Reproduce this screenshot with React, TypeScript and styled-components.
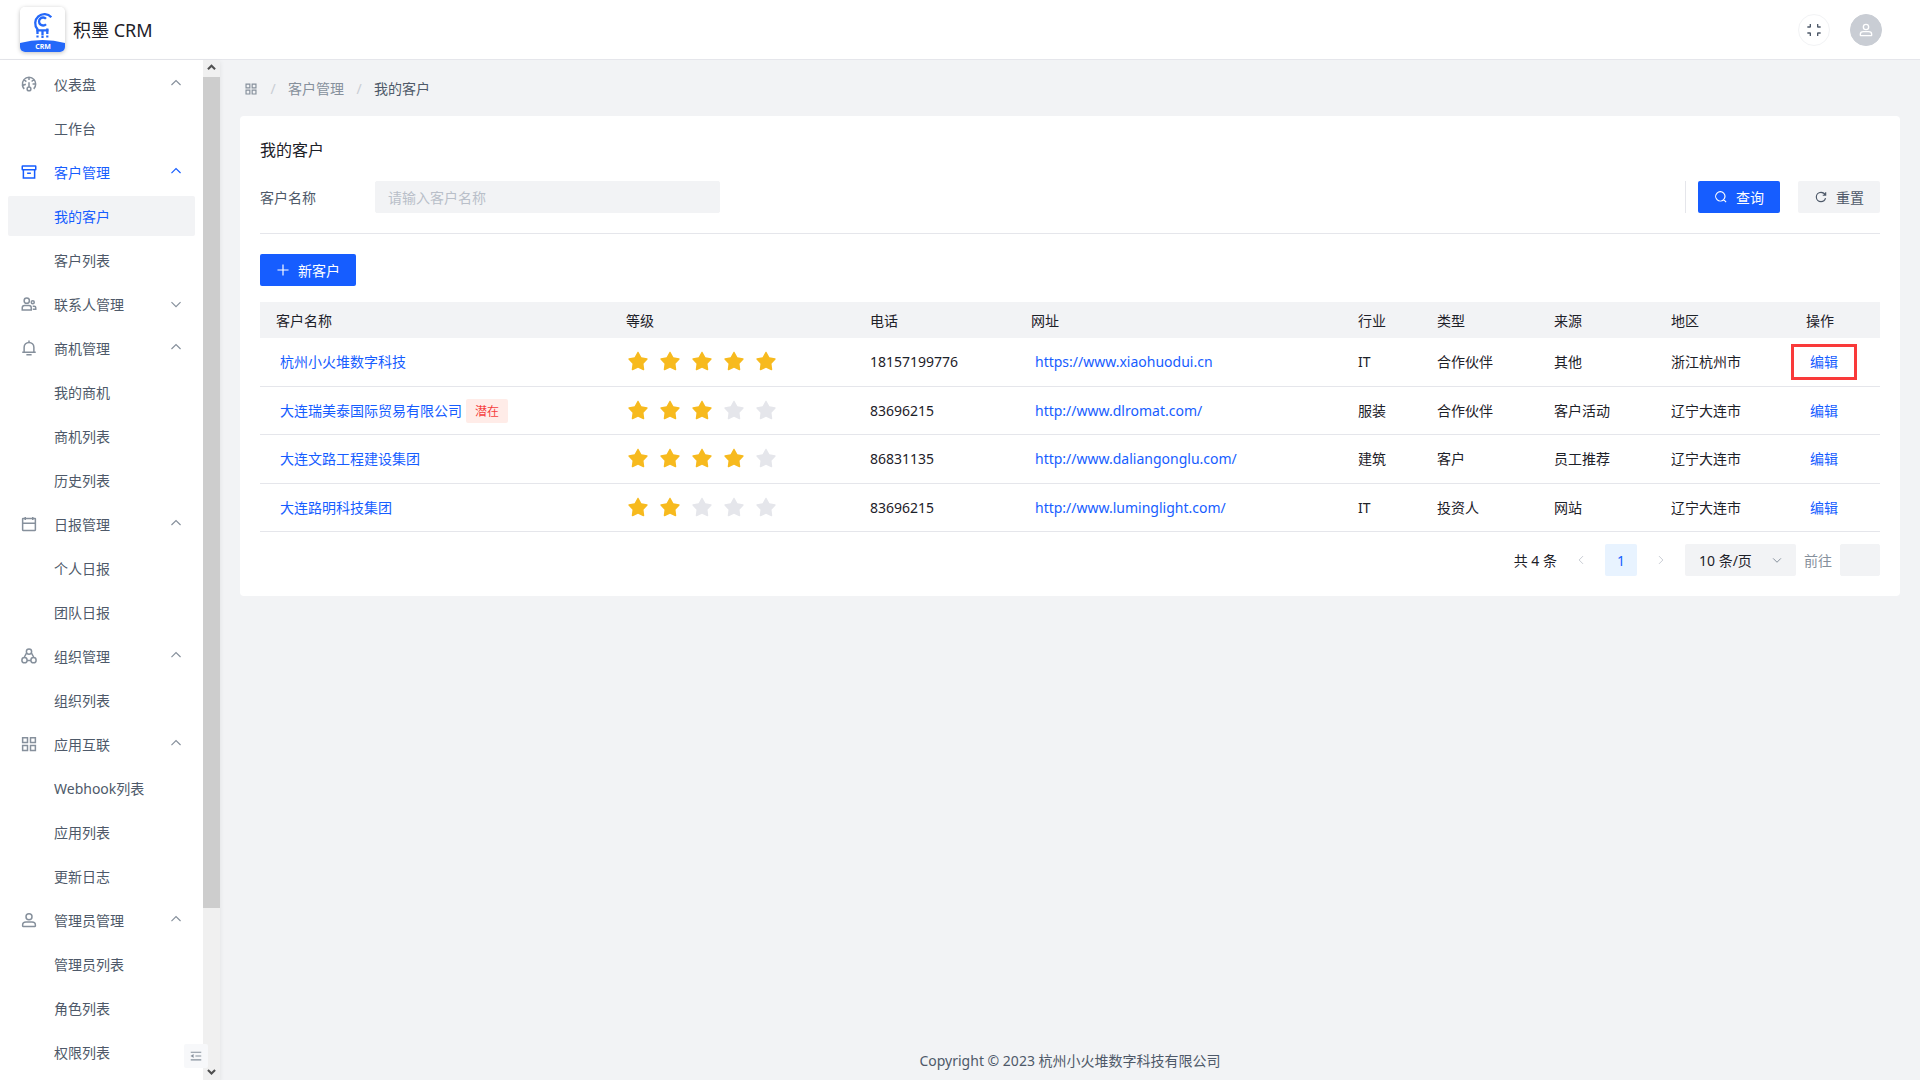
import React from "react";
import styled, { createGlobalStyle } from "styled-components";

const c = {
  text1: "#1d2129",
  text2: "#4e5969",
  text3: "#86909c",
  text4: "#c9cdd4",
  fill: "#f2f3f5",
  line: "#e5e6eb",
  blue: "#165dff",
};

const Global = createGlobalStyle`
  *, *::before, *::after { box-sizing: border-box; }
  body {
    margin: 0;
    background: ${c.fill};
    color: ${c.text1};
    font: 14px/22px "Noto Sans", "Noto Sans CJK SC", sans-serif;
  }
  button, input, select { font: inherit; color: inherit; margin: 0; }
  button { cursor: pointer; }
  a { text-decoration: none; color: inherit; }
`;

/* ---------- icons ---------- */

const Svg = styled.svg<{ $size: number }>`
  width: ${(p) => p.$size}px;
  height: ${(p) => p.$size}px;
  flex: none;
  display: block;
  fill: none;
  stroke: currentColor;
  stroke-width: 4;
`;

const paths = {
  dashboard:
    "M41.808 24c.118 4.63-1.486 9.333-5.21 13m5.21-13h-8.309m8.309 0c-.112-4.38-1.767-8.694-4.627-12M24 6c5.531 0 10.07 2.404 13.18 6M24 6c-5.724 0-10.384 2.574-13.5 6.38M24 6v7.5M37.18 12 31 17.5m-20.5-5.12L17 17.5m-6.5-5.12C6.99 16.662 5.44 22.508 6.53 28m4.872 9c-2.65-2.609-4.226-5.742-4.873-9m0 0 8.97-3.5M24 32a5 5 0 1 0 0 10 5 5 0 0 0 0-10Zm0 0V19",
  archive:
    "M9 18h30v22H9zM6 9a1 1 0 0 1 1-1h34a1 1 0 0 1 1 1v8a1 1 0 0 1-1 1H7a1 1 0 0 1-1-1V9ZM19 27h10",
  group:
    "M25 15a7 7 0 1 1-14 0 7 7 0 0 1 14 0ZM38 19a4 4 0 1 1-8 0 4 4 0 0 1 8 0ZM6 34a6 6 0 0 1 6-6h12a6 6 0 0 1 6 6v6H6v-6ZM34 30h4a4 4 0 0 1 4 4v4h-8",
  bell: "M24 9c7.18 0 13 5.82 13 13v13H11V22c0-7.18 5.82-13 13-13Zm0 0V4M6 35h36m-25 7h14",
  calendar:
    "M7 22h34M14 5v8m20-8v8M8 41h32a1 1 0 0 0 1-1V10a1 1 0 0 0-1-1H8a1 1 0 0 0-1 1v30a1 1 0 0 0 1 1Z",
  org: "M31 12a7 7 0 1 1-14 0 7 7 0 0 1 14 0ZM19 35a7 7 0 1 1-14 0 7 7 0 0 1 14 0ZM43 35a7 7 0 1 1-14 0 7 7 0 0 1 14 0ZM18 15 11 28M30 15 37 28M19 36h10",
  apps: "M7 7h13v13H7zM28 7h13v13H28zM7 28h13v13H7zM28 28h13v13H28z",
  user: "M7 37c0-4.97 4.03-8 9-8h16c4.97 0 9 3.03 9 8v3a1 1 0 0 1-1 1H8a1 1 0 0 1-1-1v-3ZM32 15a8 8 0 1 1-16 0 8 8 0 0 1 16 0Z",
  exitFull:
    "M35 6v8a1 1 0 0 0 1 1h8M13 6v8a1 1 0 0 1-1 1H4m31 27v-8a1 1 0 0 1 1-1h8m-31 9v-8a1 1 0 0 0-1-1H4",
  search:
    "M33.072 33.071c6.248-6.248 6.248-16.379 0-22.627-6.249-6.249-16.38-6.249-22.628 0-6.248 6.248-6.248 16.379 0 22.627 6.248 6.248 16.38 6.248 22.628 0Zm0 0 8.485 8.485",
  refresh:
    "M38.837 18C36.463 12.136 30.715 8 24 8 15.163 8 8 15.163 8 24s7.163 16 16 16c7.455 0 13.72-5.1 15.496-12M40 8v10H30",
  plus: "M5 24h38M24 5v38",
  up: "M39.6 27.557 24.043 12 8.487 27.557",
  down: "M39.6 17.443 24.043 33 8.487 17.443",
  left: "M32 8.4 16.444 23.956 32 39.513",
  right: "M16 39.513 31.556 23.957 16 8.4",
  fold: "M42 11H6M42 24H22M42 37H6M13.66 26.912l-4.82-3.118 4.82-3.118v6.236Z",
};
type IconName = keyof typeof paths;

const Icon = ({ name, size = 14 }: { name: IconName; size?: number }) => (
  <Svg $size={size} viewBox="0 0 48 48" aria-hidden="true">
    <path d={paths[name]} />
  </Svg>
);

const StarSvg = styled.svg<{ $on: boolean }>`
  width: 24px;
  height: 24px;
  fill: ${(p) => (p.$on ? "#f7ba1e" : c.line)};
`;
const Star = ({ on }: { on: boolean }) => (
  <StarSvg $on={on} viewBox="0 1 48 48">
    <path d="M22.683 5.415c.568-1.043 2.065-1.043 2.634 0l5.507 10.098 11.305 2.117c1.167.219 1.63 1.635.814 2.497l-7.902 8.357 1.48 11.407c.153 1.177-1.051 2.052-2.124 1.543L24 36.5l-10.397 4.934c-1.073.51-2.277-.366-2.124-1.543l1.48-11.407-7.902-8.357c-.815-.862-.353-2.278.814-2.497l11.305-2.117 5.507-10.098Z" />
  </StarSvg>
);

/* ---------- frame ---------- */

const Page = styled.div`
  height: 100vh;
  display: flex;
  flex-direction: column;
`;
const TopBar = styled.header`
  flex: none;
  height: 60px;
  padding: 0 38px 0 20px;
  display: flex;
  align-items: center;
  justify-content: space-between;
  background: #fff;
  border-bottom: 1px solid ${c.line};
`;
const Brand = styled.div`
  display: flex;
  align-items: center;
  gap: 8px;
`;
const LogoBox = styled.svg`
  width: 45px;
  height: 45px;
  border-radius: 5px;
  box-shadow: 0 1px 4px rgba(0, 0, 0, 0.25);
`;
const BrandName = styled.h1`
  margin: 0;
  font-size: 18px;
  line-height: 28px;
  font-weight: 400;
`;
const Tools = styled.div`
  display: flex;
  gap: 20px;
`;
const RoundButton = styled.button<{ $filled?: boolean }>`
  width: 32px;
  height: 32px;
  padding: 0;
  display: grid;
  place-items: center;
  border-radius: 50%;
  border: 1px solid ${(p) => (p.$filled ? c.text4 : c.fill)};
  background: ${(p) => (p.$filled ? c.text4 : "#fff")};
  color: ${(p) => (p.$filled ? "#fff" : c.text2)};
`;
const Body = styled.div`
  flex: 1;
  min-height: 0;
  display: flex;
`;

/* ---------- side menu ---------- */

const Side = styled.aside`
  position: relative;
  flex: none;
  width: 220px;
  display: flex;
  background: #fff;
  box-shadow: 0 2px 5px rgba(0, 0, 0, 0.08);
`;
const Menu = styled.nav`
  flex: 1;
  min-width: 0;
  overflow: hidden;
  padding: 4px 8px;
  display: flex;
  flex-direction: column;
  gap: 4px;
`;
const GroupButton = styled.button<{ $active?: boolean }>`
  flex: none;
  height: 40px;
  padding: 0 12px;
  display: flex;
  align-items: center;
  gap: 16px;
  border: 0;
  background: none;
  text-align: left;
  color: ${(p) => (p.$active ? c.blue : c.text2)};
  > svg {
    color: ${(p) => (p.$active ? c.blue : c.text3)};
  }
`;
const GroupLabel = styled.span`
  flex: 1;
  padding-top: 2px;
`;
const MenuLink = styled.a<{ $active?: boolean }>`
  flex: none;
  height: 40px;
  padding: 1px 12px 0 46px;
  line-height: 40px;
  border-radius: 2px;
  color: ${(p) => (p.$active ? c.blue : c.text2)};
  background: ${(p) => (p.$active ? c.fill : "none")};
`;
const Scroll = styled.div`
  flex: none;
  width: 17px;
  display: flex;
  flex-direction: column;
  background: #f0f0f0;
  color: #505050;
`;
const ScrollEnd = styled.div`
  height: 17px;
  display: grid;
  place-items: center;
  svg {
    stroke-width: 9;
  }
`;
const Thumb = styled.div`
  flex: 831;
  background: #cdcdcd;
`;
const Rest = styled.div`
  flex: 155;
`;
const FoldButton = styled.button`
  position: absolute;
  right: 12px;
  bottom: 12px;
  width: 24px;
  height: 24px;
  padding: 0;
  display: grid;
  place-items: center;
  border: 0;
  border-radius: 2px;
  background: #f7f8fa;
  color: ${c.text3};
`;

/* ---------- content ---------- */

const Main = styled.main`
  flex: 1;
  min-width: 0;
  padding: 0 20px;
  display: flex;
  flex-direction: column;
`;
const Crumbs = styled.nav`
  height: 56px;
  padding: 2px 4px 0;
  display: flex;
  align-items: center;
  gap: 12px;
  color: ${c.text3};
`;
const Slash = styled.span`
  width: 6px;
  text-align: center;
  color: ${c.text4};
`;
const Here = styled.span`
  color: ${c.text2};
`;
const Card = styled.section`
  padding: 20px;
  border-radius: 4px;
  background: #fff;
`;
const CardTitle = styled.h2`
  margin: 0 0 18px;
  padding-top: 1px;
  font-size: 16px;
  line-height: 26px;
  font-weight: 400;
`;
const Filter = styled.form`
  display: flex;
  align-items: center;
  padding-bottom: 20px;
  border-bottom: 1px solid ${c.line};
`;
const FieldLabel = styled.label`
  width: 115px;
  padding-top: 2px;
  color: ${c.text2};
`;
const TextInput = styled.input`
  width: 345px;
  height: 32px;
  padding: 0 12px;
  border: 1px solid ${c.fill};
  border-radius: 2px;
  background: ${c.fill};
  &::placeholder {
    color: #b9bfc9;
  }
`;
const FilterActions = styled.div`
  margin-left: auto;
  padding-left: 12px;
  display: flex;
  gap: 18px;
  border-left: 1px solid ${c.line};
`;
const Button = styled.button<{ $primary?: boolean }>`
  height: 32px;
  padding: 0 16px;
  display: flex;
  align-items: center;
  gap: 8px;
  border: 0;
  border-radius: 2px;
  color: ${(p) => (p.$primary ? "#fff" : c.text2)};
  background: ${(p) => (p.$primary ? c.blue : c.fill)};
`;
const ButtonText = styled.span`
  padding-top: 2px;
`;
const Actions = styled.div`
  display: flex;
  padding: 20px 0 16px;
`;

const Table = styled.table`
  width: 100%;
  table-layout: fixed;
  border-collapse: separate;
  border-spacing: 0;
`;
const Th = styled.th`
  height: 36px;
  padding: 2px 16px 0;
  font-weight: 400;
  text-align: left;
  background: ${c.fill};
`;
const Row = styled.tr`
  height: 48px;
  &:nth-child(odd) {
    height: 49px;
  }
`;
const Td = styled.td`
  padding: 0 16px;
  border-bottom: 1px solid ${c.line};
  white-space: nowrap;
`;
const CellLine = styled.div`
  display: flex;
  align-items: center;
`;
const Link = styled.a`
  padding: 0 4px;
  color: ${c.blue};
`;
const EditLink = styled(Link)<{ $marked?: boolean }>`
  display: inline-block;
  ${(p) =>
    p.$marked &&
    `padding: 4px 16px;
     margin: 0 -15px;
     border: 3px solid #f93a3a;`}
`;
const Tag = styled.span`
  height: 24px;
  padding: 1px 9px 0;
  border-radius: 2px;
  font-size: 12px;
  line-height: 24px;
  color: #f53f3f;
  background: #ffece8;
`;
const Stars = styled.div`
  display: flex;
  gap: 8px;
`;

const Pager = styled.div`
  padding-top: 12px;
  display: flex;
  align-items: center;
  justify-content: flex-end;
  gap: 8px;
`;
const PageButton = styled.button<{ $current?: boolean }>`
  width: 32px;
  height: 32px;
  padding: 0;
  display: grid;
  place-items: center;
  border: 0;
  border-radius: 2px;
  background: ${(p) => (p.$current ? "#e8f3ff" : "none")};
  color: ${(p) => (p.$current ? c.blue : c.text4)};
`;
const PagerText = styled.span`
  padding-top: 2px;
`;
const SelectWrap = styled.div`
  position: relative;
  svg {
    position: absolute;
    right: 13px;
    top: 10px;
    color: ${c.text3};
    pointer-events: none;
  }
`;
const Select = styled.select`
  appearance: none;
  width: 111px;
  height: 32px;
  padding: 1px 14px 0;
  border: 0;
  border-radius: 2px;
  background: ${c.fill};
`;
const JumpLabel = styled.label`
  padding-top: 2px;
  color: ${c.text3};
`;
const JumpInput = styled(TextInput)`
  width: 40px;
`;
const Footer = styled.footer`
  margin-top: auto;
  padding-top: 1px;
  height: 40px;
  line-height: 40px;
  text-align: center;
  color: ${c.text2};
`;

/* ---------- data ---------- */

type Group = { icon: IconName; label: string; active?: boolean; items: string[] };
const menu: Group[] = [
  { icon: "dashboard", label: "仪表盘", items: ["工作台"] },
  { icon: "archive", label: "客户管理", active: true, items: ["我的客户", "客户列表"] },
  { icon: "group", label: "联系人管理", items: [] },
  { icon: "bell", label: "商机管理", items: ["我的商机", "商机列表", "历史列表"] },
  { icon: "calendar", label: "日报管理", items: ["个人日报", "团队日报"] },
  { icon: "org", label: "组织管理", items: ["组织列表"] },
  { icon: "apps", label: "应用互联", items: ["Webhook列表", "应用列表", "更新日志"] },
  { icon: "user", label: "管理员管理", items: ["管理员列表", "角色列表", "权限列表"] },
];

const columns: [string, number][] = [
  ["客户名称", 350],
  ["等级", 244],
  ["电话", 161],
  ["网址", 327],
  ["行业", 79],
  ["类型", 117],
  ["来源", 117],
  ["地区", 135],
  ["操作", 90],
];

const customers = [
  { name: "杭州小火堆数字科技", stars: 5, phone: "18157199776", url: "https://www.xiaohuodui.cn", rest: ["IT", "合作伙伴", "其他", "浙江杭州市"], marked: true },
  { name: "大连瑞美泰国际贸易有限公司", tag: "潜在", stars: 3, phone: "83696215", url: "http://www.dlromat.com/", rest: ["服装", "合作伙伴", "客户活动", "辽宁大连市"] },
  { name: "大连文路工程建设集团", stars: 4, phone: "86831135", url: "http://www.daliangonglu.com/", rest: ["建筑", "客户", "员工推荐", "辽宁大连市"] },
  { name: "大连路明科技集团", stars: 2, phone: "83696215", url: "http://www.luminglight.com/", rest: ["IT", "投资人", "网站", "辽宁大连市"] },
];

const LogoText = styled.text`
  font: 700 7px "Noto Sans", sans-serif;
  fill: #fff;
`;

const Logo = () => (
  <LogoBox viewBox="0 0 45 45" role="img" aria-label="CRM">
    <rect width="45" height="45" fill="#fff" />
    <path d="M0 36Q22.5 30 45 36V45H0Z" fill="#2468f9" />
    <g fill="none" stroke="#2468f9" strokeWidth="2.3">
      <path d="M31.3 10.2A8.9 8.9 0 1 0 17.5 22.300V27" />
      <path d="M26 11.800a4 4 0 1 0 0 5.400" />
      <path d="M16.400 23.300H28.700M22.500 23v5.500M27.300 21.500V27" />
      <path d="M16.400 29.500h2.200M21.400 30h2.200M26.200 29.500h2.200" strokeWidth="2" />
    </g>
    <LogoText x="23" y="41.5" textAnchor="middle">
      CRM
    </LogoText>
  </LogoBox>
);

export default function App() {
  return (
    <Page>
      <Global />
      <TopBar>
        <Brand>
          <Logo />
          <BrandName>积墨 CRM</BrandName>
        </Brand>
        <Tools>
          <RoundButton type="button" aria-label="退出全屏">
            <Icon name="exitFull" size={16} />
          </RoundButton>
          <RoundButton type="button" $filled aria-label="用户">
            <Icon name="user" size={16} />
          </RoundButton>
        </Tools>
      </TopBar>
      <Body>
        <Side>
          <Menu>
            {menu.map((g) => (
              <React.Fragment key={g.label}>
                <GroupButton type="button" $active={g.active}>
                  <Icon name={g.icon} size={18} />
                  <GroupLabel>{g.label}</GroupLabel>
                  <Icon name={g.items.length ? "up" : "down"} size={14} />
                </GroupButton>
                {g.items.map((item) => (
                  <MenuLink key={item} href="#" $active={item === "我的客户"}>
                    {item}
                  </MenuLink>
                ))}
              </React.Fragment>
            ))}
          </Menu>
          <Scroll>
            <ScrollEnd>
              <Icon name="up" size={11} />
            </ScrollEnd>
            <Thumb />
            <Rest />
            <ScrollEnd>
              <Icon name="down" size={11} />
            </ScrollEnd>
          </Scroll>
          <FoldButton type="button" aria-label="收起菜单">
            <Icon name="fold" size={14} />
          </FoldButton>
        </Side>
        <Main>
          <Crumbs>
            <Icon name="apps" size={14} />
            <Slash>/</Slash>
            <a href="#">客户管理</a>
            <Slash>/</Slash>
            <Here>我的客户</Here>
          </Crumbs>
          <Card>
            <CardTitle>我的客户</CardTitle>
            <Filter>
              <FieldLabel htmlFor="name">客户名称</FieldLabel>
              <TextInput id="name" placeholder="请输入客户名称" />
              <FilterActions>
                <Button type="button" $primary>
                  <Icon name="search" />
                  <ButtonText>查询</ButtonText>
                </Button>
                <Button type="reset">
                  <Icon name="refresh" />
                  <ButtonText>重置</ButtonText>
                </Button>
              </FilterActions>
            </Filter>
            <Actions>
              <Button type="button" $primary>
                <Icon name="plus" />
                <ButtonText>新客户</ButtonText>
              </Button>
            </Actions>
            <Table>
              <colgroup>
                {columns.map(([label, width]) => (
                  <col key={label} width={width} />
                ))}
              </colgroup>
              <thead>
                <tr>
                  {columns.map(([label]) => (
                    <Th key={label}>{label}</Th>
                  ))}
                </tr>
              </thead>
              <tbody>
                {customers.map((r) => (
                  <Row key={r.name}>
                    <Td>
                      <CellLine>
                        <Link href="#">{r.name}</Link>
                        {r.tag && <Tag>{r.tag}</Tag>}
                      </CellLine>
                    </Td>
                    <Td>
                      <Stars role="img" aria-label={`${r.stars} / 5`}>
                        {[1, 2, 3, 4, 5].map((n) => (
                          <Star key={n} on={n <= r.stars} />
                        ))}
                      </Stars>
                    </Td>
                    <Td>{r.phone}</Td>
                    <Td>
                      <Link href={r.url}>{r.url}</Link>
                    </Td>
                    {r.rest.map((v) => (
                      <Td key={v}>{v}</Td>
                    ))}
                    <Td>
                      <EditLink href="#" $marked={r.marked}>
                        编辑
                      </EditLink>
                    </Td>
                  </Row>
                ))}
              </tbody>
            </Table>
            <Pager>
              <PagerText>共 4 条</PagerText>
              <PageButton type="button" disabled aria-label="上一页">
                <Icon name="left" size={12} />
              </PageButton>
              <PageButton type="button" $current>
                <PagerText>1</PagerText>
              </PageButton>
              <PageButton type="button" disabled aria-label="下一页">
                <Icon name="right" size={12} />
              </PageButton>
              <SelectWrap>
                <Select aria-label="每页条数" defaultValue="10">
                  <option value="10">10 条/页</option>
                </Select>
                <Icon name="down" size={12} />
              </SelectWrap>
              <JumpLabel htmlFor="jump">前往</JumpLabel>
              <JumpInput id="jump" />
            </Pager>
          </Card>
          <Footer>Copyright © 2023 杭州小火堆数字科技有限公司</Footer>
        </Main>
      </Body>
    </Page>
  );
}
